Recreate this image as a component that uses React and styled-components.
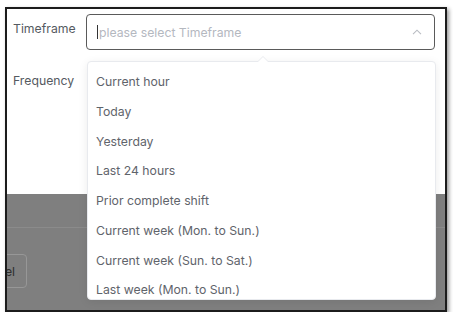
import styled, { createGlobalStyle } from 'styled-components';

const Global = createGlobalStyle`
  body {
    margin: 0;
    background: #ffffff;
    font-family: Inter, "Liberation Sans", sans-serif;
  }
`;

const Frame = styled.div`
  position: relative;
  box-sizing: border-box;
  margin: 7px 0 0 5px;
  width: 442px;
  height: 305px;
  border: 2px solid #1c1c1c;
  box-shadow: 2px 2px 4px rgba(0, 0, 0, 0.4);
  display: flex;
  flex-direction: column;
  overflow: hidden;
`;

const FormArea = styled.div`
  box-sizing: border-box;
  height: 185px;
  background: #ffffff;
  padding: 5px 10px 0 6px;
  display: flex;
  flex-direction: column;
  gap: 16px;
`;

const Row = styled.div`
  display: grid;
  grid-template-columns: 73px 349px;
  align-items: start;
`;

const Label = styled.label`
  padding-top: 7px;
  font-size: 12.25px;
  line-height: 16px;
  color: #555a61;
`;

const Select = styled.div`
  box-sizing: border-box;
  height: 36px;
  border: 1px solid #5a5a5a;
  border-radius: 4px;
  display: flex;
  align-items: center;
  padding: 0 12px 0 10px;
  background: #fff;
`;

const Caret = styled.span`
  width: 1px;
  height: 14px;
  background: #333;
  margin-right: 1px;
`;

const Placeholder = styled.span`
  flex: 1;
  font-size: 12.25px;
  color: #b4b8bf;
`;

const Empty = styled.div`
  height: 36px;
`;

const Dimmed = styled.div`
  flex: 1;
  background: #7f7f7f;
  display: flex;
  flex-direction: column;
`;

const DimBody = styled.div`
  height: 33px;
  border-bottom: 1px solid #8b8b8b;
`;

const Footer = styled.div`
  display: flex;
  padding-top: 26px;
`;

const GhostButton = styled.div`
  box-sizing: border-box;
  height: 34px;
  width: 70px;
  margin-left: -50px;
  border: 1px solid #979797;
  border-radius: 4px;
  display: flex;
  align-items: center;
  justify-content: flex-end;
  padding-right: 11px;
  font-size: 12.25px;
  color: #2e2e2e;
`;

const Popper = styled.div`
  position: absolute;
  left: 80px;
  top: 52px;
  width: 349px;
  height: 239px;
  box-sizing: border-box;
  background: #fff;
  border: 1px solid #e8eaee;
  border-radius: 4px;
  box-shadow: 0 2px 10px rgba(0, 0, 0, 0.08);
  padding-top: 5px;

  &::before {
    content: '';
    position: absolute;
    top: -6px;
    left: 169px;
    border-left: 6px solid transparent;
    border-right: 6px solid transparent;
    border-bottom: 6px solid #e8eaee;
  }
  &::after {
    content: '';
    position: absolute;
    top: -5px;
    left: 170px;
    border-left: 5px solid transparent;
    border-right: 5px solid transparent;
    border-bottom: 5px solid #fff;
  }
`;

const List = styled.ul`
  list-style: none;
  margin: 0;
  padding: 0;
  height: 100%;
  overflow: hidden;
`;

const Option = styled.li`
  height: 29.75px;
  line-height: 29.75px;
  padding-left: 8px;
  font-size: 12.25px;
  color: #5f646b;
  white-space: nowrap;
`;

const options = [
  'Current hour',
  'Today',
  'Yesterday',
  'Last 24 hours',
  'Prior complete shift',
  'Current week (Mon. to Sun.)',
  'Current week (Sun. to Sat.)',
  'Last week (Mon. to Sun.)',
];

function ChevronUp() {
  return (
    <svg width="10" height="6" viewBox="0 0 10 6" fill="none">
      <path d="M1 5.2L5 1.2L9 5.2" stroke="#b9bcc2" strokeWidth="1.1" />
    </svg>
  );
}

export default function App() {
  return (
    <>
      <Global />
      <Frame>
        <FormArea>
          <Row>
            <Label>Timeframe</Label>
            <Select>
              <Caret />
              <Placeholder>please select Timeframe</Placeholder>
              <ChevronUp />
            </Select>
          </Row>
          <Row>
            <Label>Frequency</Label>
            <Empty />
          </Row>
        </FormArea>
        <Dimmed>
          <DimBody />
          <Footer>
            <GhostButton>Cancel</GhostButton>
          </Footer>
        </Dimmed>
        <Popper>
          <List>
            {options.map((o) => (
              <Option key={o}>{o}</Option>
            ))}
          </List>
        </Popper>
      </Frame>
    </>
  );
}
